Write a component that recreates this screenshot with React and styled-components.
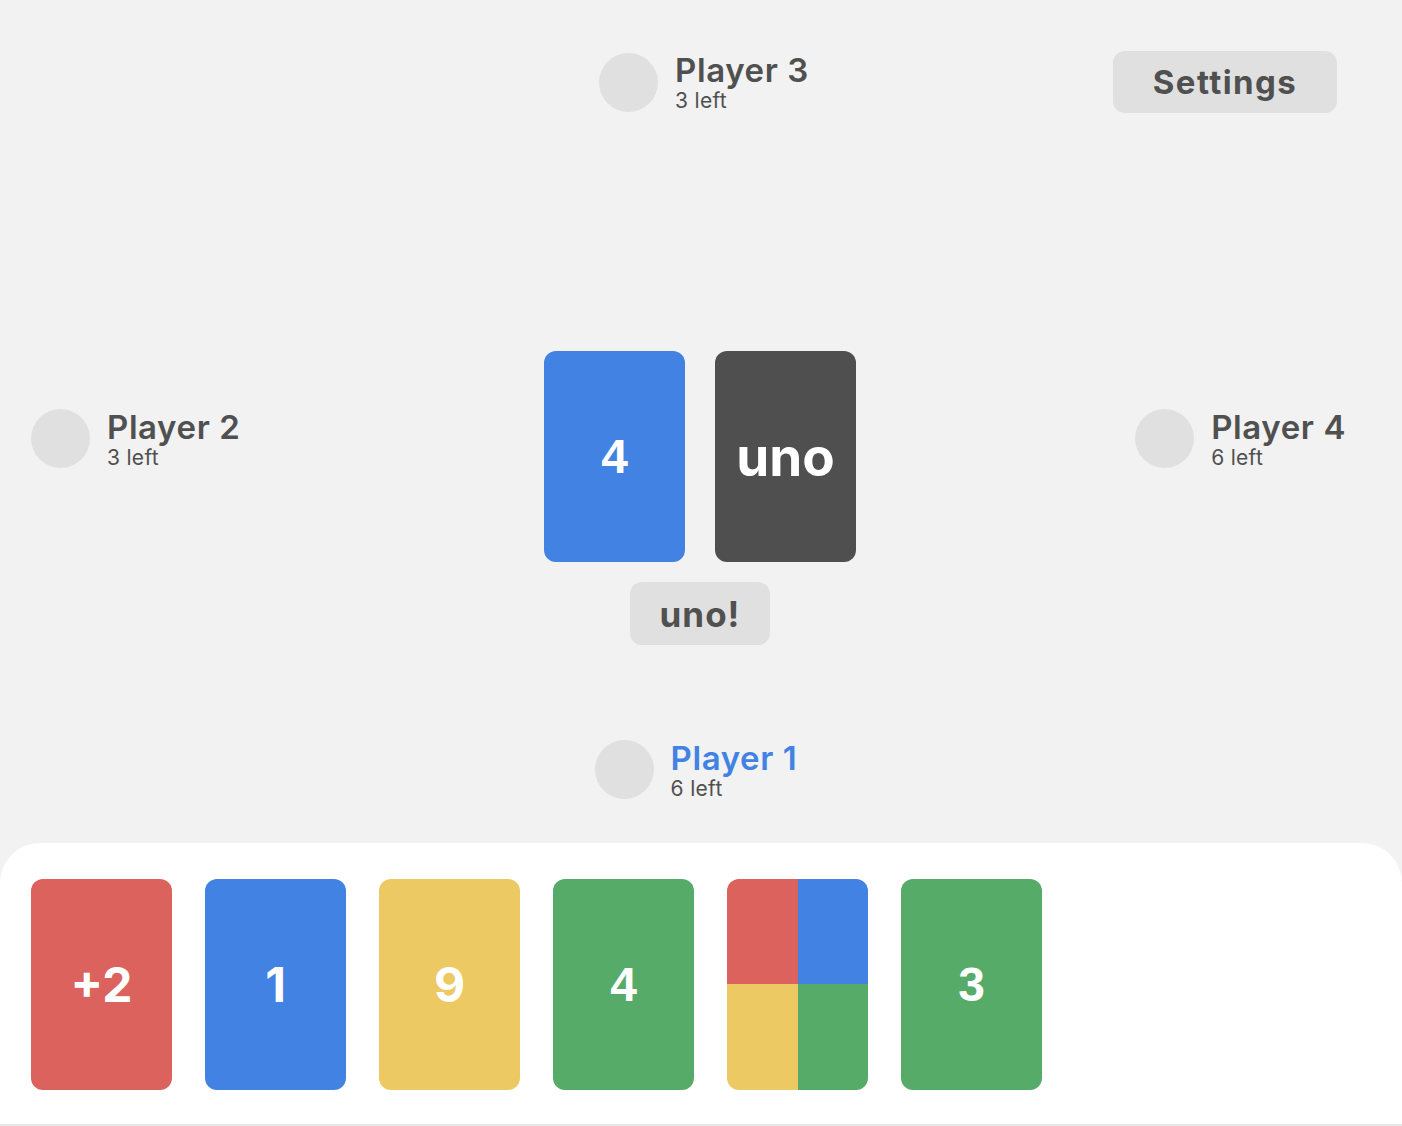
import React from "react";
import styled, { createGlobalStyle } from "styled-components";

const GlobalStyle = createGlobalStyle`
  * {
    box-sizing: border-box;
  }
  body {
    margin: 0;
    background: #e6e6e6;
    font-family: Inter, "Open Sans", "Noto Sans", sans-serif;
    color: #505050;
  }
`;

const COLORS = {
  red: "#dc625e",
  blue: "#4282e3",
  yellow: "#ecc963",
  green: "#56ab69",
  dark: "#4f4f4f",
};

const opponents = {
  top: { name: "Player 3", left: 3 },
  left: { name: "Player 2", left: 3 },
  right: { name: "Player 4", left: 6 },
};

const hand = [
  { color: "red", label: "+2" },
  { color: "blue", label: "1" },
  { color: "yellow", label: "9" },
  { color: "green", label: "4", plain: true },
  { color: "wild" },
  { color: "green", label: "3", plain: true },
];

const Player = ({ name, left, active }) => (
  <PlayerBox>
    <Avatar />
    <PlayerText>
      <Name $active={active}>{name}</Name>
      <Left>{left} left</Left>
    </PlayerText>
  </PlayerBox>
);

const Card = ({ color, label, plain }) => {
  if (color === "wild") {
    return (
      <WildCard>
        <Quarter $color={COLORS.red} />
        <Quarter $color={COLORS.blue} />
        <Quarter $color={COLORS.yellow} />
        <Quarter $color={COLORS.green} />
      </WildCard>
    );
  }
  return (
    <CardFace $color={COLORS[color]} $plain={plain}>
      {label}
    </CardFace>
  );
};

const App = () => {
  return (
    <>
      <GlobalStyle />
      <Page>
        <Table>
          <TopRow>
            <span />
            <Player {...opponents.top} />
            <SettingsButton>Settings</SettingsButton>
          </TopRow>
          <MiddleRow>
            <Side>
              <Player {...opponents.left} />
            </Side>
            <Center>
              <Pile>
                <CardFace $color={COLORS.blue} $plain>
                  4
                </CardFace>
                <Deck>uno</Deck>
              </Pile>
              <UnoButton>uno!</UnoButton>
            </Center>
            <Side $right>
              <Player {...opponents.right} />
            </Side>
          </MiddleRow>
          <BottomRow>
            <Player name="Player 1" left={6} active />
          </BottomRow>
        </Table>
        <Hand>
          {hand.map((card, i) => (
            <Card key={i} {...card} />
          ))}
        </Hand>
      </Page>
    </>
  );
};

const Page = styled.div`
  min-height: 1126px;
  display: flex;
  flex-direction: column;
  padding-bottom: 2px;
`;

const Table = styled.div`
  flex: 1;
  background: #f2f2f2;
  display: flex;
  flex-direction: column;
  margin-bottom: -40px;
  padding-bottom: 84px;
`;

const TopRow = styled.div`
  display: grid;
  grid-template-columns: 1fr auto 1fr;
  align-items: center;
  padding: 51px 65px 0 65px;
  > :nth-child(2) {
    margin-left: 6px;
  }
  > :last-child {
    justify-self: end;
  }
`;

const MiddleRow = styled.div`
  display: grid;
  grid-template-columns: 1fr auto 1fr;
  align-items: start;
  margin-top: 238px;
`;

const Side = styled.div`
  display: flex;
  justify-content: ${(p) => (p.$right ? "flex-end" : "flex-start")};
  padding: 58px ${(p) => (p.$right ? "56px" : "0")} 0
    ${(p) => (p.$right ? "0" : "31px")};
`;

const Center = styled.div`
  display: flex;
  flex-direction: column;
  align-items: center;
  gap: 20px;
  margin-left: -2px;
`;

const Pile = styled.div`
  display: flex;
  gap: 30px;
`;

const BottomRow = styled.div`
  display: flex;
  justify-content: center;
  margin-top: 95px;
  padding-right: 10px;
`;

const PlayerBox = styled.div`
  display: flex;
  align-items: center;
  gap: 17px;
  height: 59px;
`;

const Avatar = styled.div`
  width: 59px;
  height: 59px;
  border-radius: 50%;
  background: #e0e0e0;
  flex-shrink: 0;
`;

const PlayerText = styled.div`
  display: flex;
  flex-direction: column;
  margin-top: 2px;
`;

const Name = styled.div`
  font-size: 33px;
  font-weight: 600;
  letter-spacing: 0.6px;
  line-height: 36px;
  color: ${(p) => (p.$active ? "#4282e3" : "#505050")};
`;

const Left = styled.div`
  font-size: 21px;
  line-height: 26px;
  letter-spacing: 0.3px;
  color: #505050;
`;

const GreyButton = styled.button`
  border: none;
  background: #e0e0e0;
  border-radius: 12px;
  color: #505050;
  font-family: inherit;
  font-weight: 700;
  font-size: 33px;
  letter-spacing: 1px;
  height: 63px;
  cursor: pointer;
`;

const SettingsButton = styled(GreyButton)`
  width: 224px;
  height: 62px;
  letter-spacing: 1.4px;
`;

const UnoButton = styled(GreyButton)`
  width: 140px;
  font-size: 35px;
`;

const CardBase = styled.div`
  width: 141px;
  height: 211px;
  border-radius: 12px;
  flex-shrink: 0;
`;

const CardFace = styled(CardBase)`
  background: ${(p) => p.$color};
  color: #fff;
  display: flex;
  align-items: center;
  justify-content: center;
  font-size: 48px;
  font-weight: 700;
  font-family: ${(p) =>
    p.$plain ? '"Liberation Sans", Arial, sans-serif' : "inherit"};
`;

const Deck = styled(CardFace)`
  background: #4f4f4f;
  font-size: 53px;
  font-weight: 700;
  font-family: inherit;
`;

const WildCard = styled(CardBase)`
  overflow: hidden;
  display: grid;
  grid-template-columns: 1fr 1fr;
  grid-template-rows: 1fr 1fr;
`;

const Quarter = styled.div`
  background: ${(p) => p.$color};
`;

const Hand = styled.div`
  position: relative;
  background: #fff;
  border-radius: 40px 40px 0 0;
  height: 281px;
  display: flex;
  align-items: center;
  gap: 33px;
  padding: 1px 31px 0;
`;

export default App;
